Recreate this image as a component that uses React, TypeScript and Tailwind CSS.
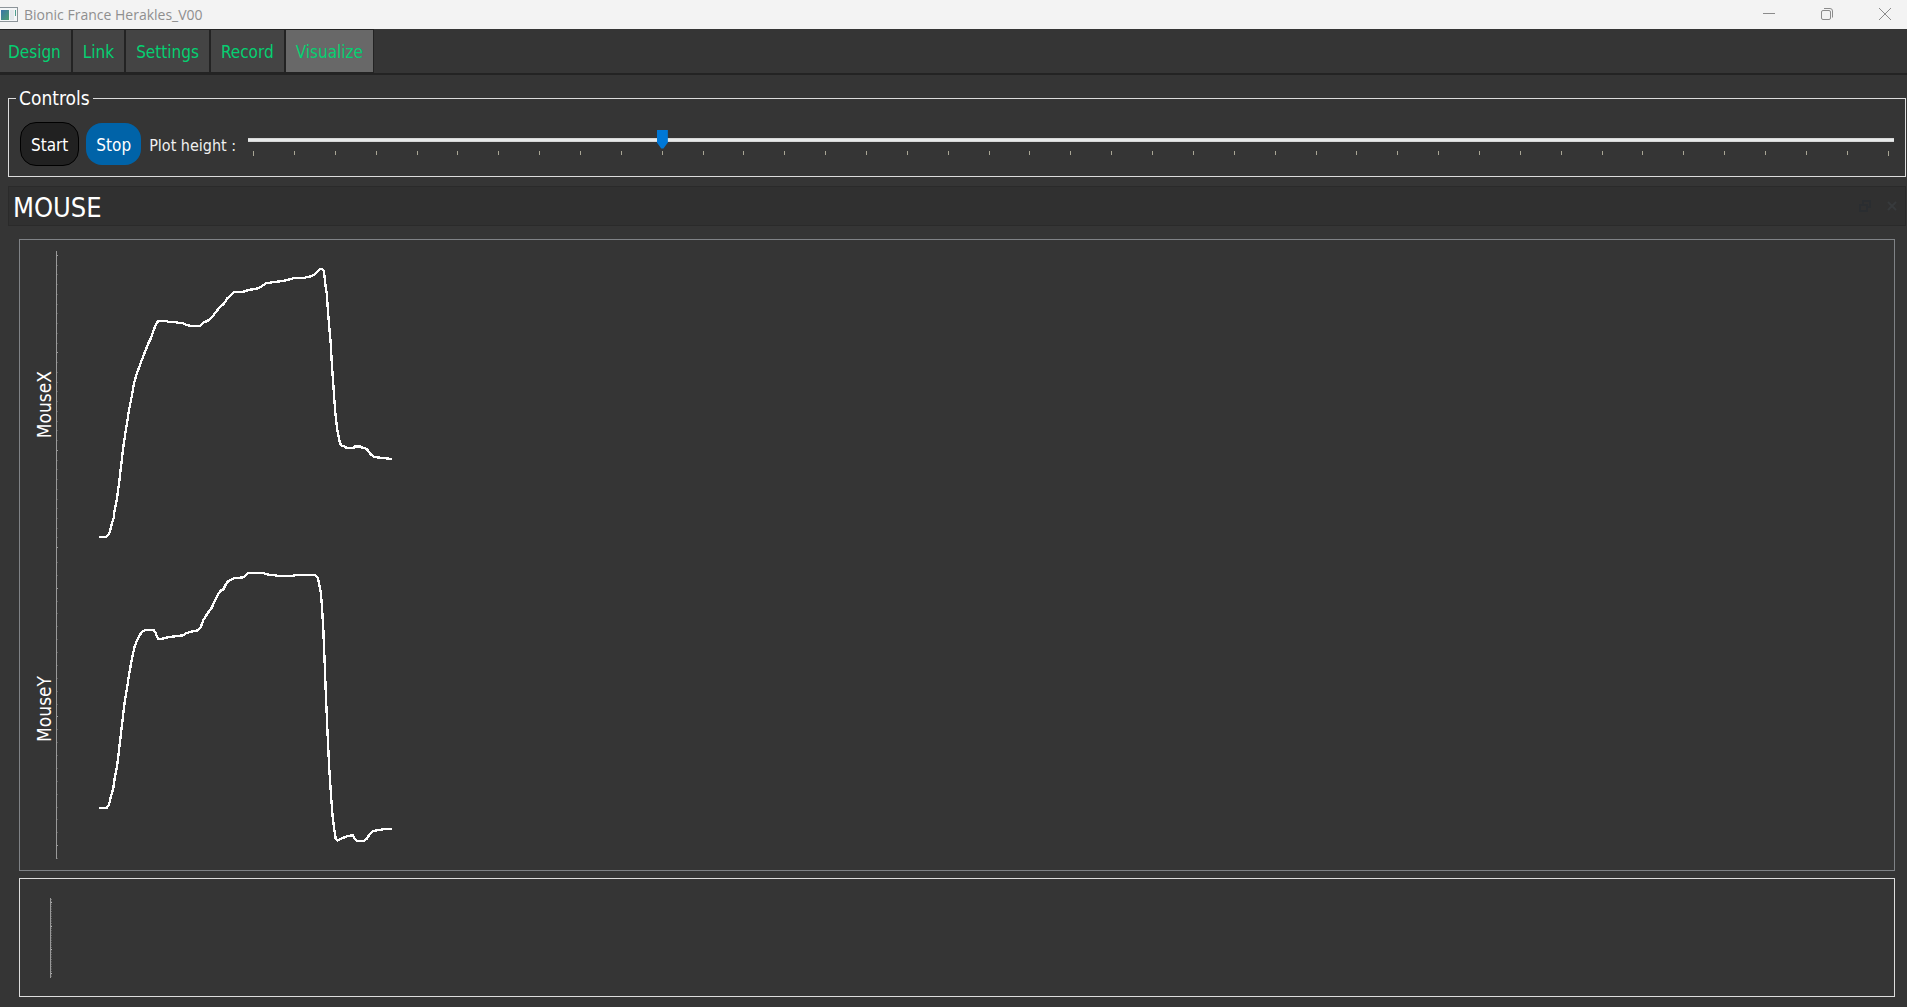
import { useState } from 'react';
import type { ReactNode } from 'react';

// ─── Data ─────────────────────────────────────────────────────────────────────

const TABS = ['Design', 'Link', 'Settings', 'Record', 'Visualize'];

interface Channel {
  name: string;
  viewBox: string;
  points: string;
  firstTick: number;
  tickStep: number;
  majorOffset: number;
}

const CHANNELS: Channel[] = [
  {
    name: 'MouseX',
    viewBox: '171 93 1005 912',
    points:
      '297,951 318,951 327,943 331,930 335,912 341,895 343,876 351,836 357,790 363,740 370,680 376,640 381,610 387,570 395,530 402,490 409,465 421,432 433,400 445,370 453,354 460,334 468,312 476,302 498,302 505,306 528,306 534,309 550,310 560,315 572,318 600,318 612,307 622,303 636,292 646,278 660,261 671,252 682,235 703,216 731,215 745,210 770,206 782,201 798,190 815,187 850,183 880,175 915,173 932,169 944,163 952,154 959,147 967,147 972,154 975,185 980,220 986,300 992,370 996,440 1001,510 1006,580 1012,630 1018,662 1023,676 1034,679 1040,684 1060,684 1066,679 1080,679 1084,682 1096,685 1104,691 1110,701 1122,711 1150,714 1176,717',
    firstTick: 4,
    tickStep: 9.74,
    majorOffset: 0,
  },
  {
    name: 'MouseY',
    viewBox: '171 45 1005 912',
    points:
      '297,804 320,804 327,794 332,772 340,744 344,715 351,680 357,630 364,570 370,520 375,480 381,445 387,405 395,360 403,323 411,301 420,284 428,274 437,269 460,269 466,277 474,296 488,296 508,291 550,286 558,280 572,275 594,271 602,262 610,240 620,224 636,202 643,185 654,163 662,152 670,148 676,136 684,124 701,115 730,112 744,99 790,99 800,103 832,107 880,107 890,105 945,104 953,112 957,130 962,155 966,200 970,270 974,370 977,450 980,520 984,610 988,690 992,750 997,820 1002,865 1007,895 1013,901 1026,895 1042,888 1058,886 1064,895 1072,903 1090,903 1100,897 1108,884 1118,873 1150,868 1176,866',
    firstTick: 7,
    tickStep: 12.87,
    majorOffset: 2,
  },
];

const SLIDER_TICKS = Array.from({ length: 41 }, (_, i) => i);

// ─── Title bar ────────────────────────────────────────────────────────────────

function AppIcon() {
  return (
    <svg className="h-4 w-[18px]" viewBox="0 0 18 16" aria-hidden="true">
      <defs>
        <linearGradient id="appicon" x1="0" y1="0" x2="1" y2="1">
          <stop offset="0" stopColor="#3a74a8" />
          <stop offset="1" stopColor="#4f9f70" />
        </linearGradient>
      </defs>
      <rect x="-0.5" y="0.5" width="18" height="14" fill="#f4f6f7" stroke="#8c9499" />
      <rect x="1" y="3" width="8" height="10" fill="url(#appicon)" />
      <rect x="10" y="3" width="4" height="10" fill="#e3e8ec" />
      <rect x="15" y="3" width="1" height="6" fill="#4f9f90" />
    </svg>
  );
}

function WindowButton({ label, children }: { label: string; children: ReactNode }) {
  return (
    <button aria-label={label} className="flex h-full w-[58px] items-center justify-center hover:bg-black/10">
      <svg className="h-3 w-3" viewBox="0 0 12 12" fill="none" stroke="#8b8b8b" aria-hidden="true">
        {children}
      </svg>
    </button>
  );
}

function TitleBar() {
  return (
    <header className="flex h-[29px] shrink-0 items-center bg-[#f3f3f3]">
      <AppIcon />
      <h1 className="ml-1.5 flex-1 font-['Open_Sans',sans-serif] text-sm text-[#8f8f8f]">
        Bionic France Herakles_V00
      </h1>
      <div className="-mr-[7px] flex h-full pb-px">
        <WindowButton label="Minimize">
          <path d="M0 5.5H12" />
        </WindowButton>
        <WindowButton label="Restore">
          <rect x="0.5" y="2.5" width="9" height="9" rx="1.5" />
          <path d="M3 .5H9a2.5 2.5 0 0 1 2.5 2.5V9.500" />
        </WindowButton>
        <WindowButton label="Close">
          <path d="M0 0L12 12M12 0L0 12" />
        </WindowButton>
      </div>
    </header>
  );
}

// ─── Tabs ─────────────────────────────────────────────────────────────────────

function TabBar() {
  const [active, setActive] = useState('Visualize');

  return (
    <nav className="flex h-[46px] shrink-0 border-b-2 border-[#232323]">
      {TABS.map((tab) => (
        <button
          key={tab}
          onClick={() => setActive(tab)}
          className={
            'border-y border-r-2 border-[#232323] px-2.5 pt-0.5 text-[17px] leading-6 text-[#05d072] first:pl-2 last:border-r ' +
            (tab === active ? 'bg-[#686868]' : 'bg-[#444444]')
          }
        >
          {tab}
        </button>
      ))}
    </nav>
  );
}

// ─── Controls ─────────────────────────────────────────────────────────────────

function HeightSlider() {
  const [height, setHeight] = useState(10);

  return (
    <div className="flex flex-1 flex-col pb-[3px]">
      <input
        id="plot-height"
        type="range"
        min={0}
        max={40}
        value={height}
        onChange={(e) => setHeight(Number(e.target.value))}
        className="h-5 w-full cursor-pointer appearance-none bg-transparent [&::-webkit-slider-runnable-track]:h-1 [&::-webkit-slider-runnable-track]:bg-[#e7eaea] [&::-webkit-slider-runnable-track]:border-y [&::-webkit-slider-runnable-track]:border-[#d6d6d6] [&::-webkit-slider-thumb]:-mt-[9px] [&::-webkit-slider-thumb]:h-[19px] [&::-webkit-slider-thumb]:w-[11px] [&::-webkit-slider-thumb]:appearance-none [&::-webkit-slider-thumb]:bg-[#0078d7] [&::-webkit-slider-thumb]:[clip-path:polygon(0_0,100%_0,100%_68%,60%_100%,40%_100%,0_68%)]"
      />
      <div className="mt-px flex h-[5px] justify-between px-[5px]" aria-hidden="true">
        {SLIDER_TICKS.map((i) => (
          <span key={i} className="h-1 w-px bg-[#a8a594] first:h-[5px] last:h-[5px]" />
        ))}
      </div>
    </div>
  );
}

function Controls() {
  return (
    <fieldset className="ml-2 mr-px mt-[11px] shrink-0 border border-[#dcdcdc] pb-[10px] pl-[11px] pr-[11px]">
      <legend className="-ml-1 px-[3px] text-[19px] leading-6 text-white">Controls</legend>
      <div className="flex items-center pt-3">
        <button className="h-11 rounded-2xl border border-black bg-[#212121] px-2.5 pt-[3px] text-[17px] text-white">
          Start
        </button>
        <button className="ml-[7px] h-[42px] rounded-2xl bg-[#0063a8] px-2.5 pt-[3px] text-[17px] text-white">
          Stop
        </button>
        <label htmlFor="plot-height" className="ml-2 mr-3 pt-[3px] text-base text-[#f0f0f0]">
          Plot height :
        </label>
        <HeightSlider />
      </div>
    </fieldset>
  );
}

// ─── Plots ────────────────────────────────────────────────────────────────────

function DockTitle() {
  return (
    <div className="ml-2 mr-px mt-[9px] flex h-10 shrink-0 items-center border border-[#2a2a2a] bg-[#303030] pl-1 pr-2">
      <h2 className="flex-1 pt-[3px] text-[27px] leading-8 text-white">MOUSE</h2>
      <button aria-label="Float panel" className="mr-4">
        <svg className="h-3 w-3" viewBox="0 0 12 12" fill="none" stroke="#2a2d30" strokeWidth="2" aria-hidden="true">
          <path d="M4 4V1H11V7H8M1 5H8V11H1Z" />
        </svg>
      </button>
      <button aria-label="Close panel">
        <svg className="h-[10px] w-[10px]" viewBox="0 0 10 10" stroke="#373a3c" strokeWidth="2" aria-hidden="true">
          <path d="M1 1L9 9M9 1L1 9" />
        </svg>
      </button>
    </div>
  );
}

function ChannelPlot({ channel }: { channel: Channel }) {
  const ticks: number[] = [];
  for (let y = channel.firstTick; y < 304; y += channel.tickStep) ticks.push(Math.round(y));

  return (
    <div className="flex min-h-0 flex-1">
      <div className="flex w-9 items-center justify-end pt-1">
        <span className="rotate-180 text-[19px] leading-6 text-white [writing-mode:vertical-rl]">{channel.name}</span>
      </div>
      <svg className="h-full w-0.5" viewBox="0 0 2 304" preserveAspectRatio="none" aria-hidden="true">
        <rect width="1" height="304" fill="#999999" />
        {ticks.map((y, i) => (
          <rect key={y} x="1" y={y} width="1" height="1" fill={i % 10 === channel.majorOffset ? '#999999' : '#5c5c5c'} />
        ))}
      </svg>
      <svg
        className="-ml-px h-full w-[335px]"
        viewBox={channel.viewBox}
        preserveAspectRatio="none"
        role="img"
        aria-label={channel.name}
      >
        <polyline points={channel.points} fill="none" stroke="#ffffff" strokeWidth="7" shapeRendering="crispEdges" />
      </svg>
    </div>
  );
}

function TimeAxis() {
  return (
    <section className="ml-[19px] mr-3 mt-[7px] h-[119px] shrink-0 border border-[#dddddd] py-[19px] pl-[30px]">
      <svg className="h-20 w-0.5" viewBox="0 0 2 80" aria-hidden="true">
        <rect width="1" height="80" fill="#999999" />
        <path d="M1.500 1V80" stroke="#6a6a6a" strokeDasharray="1 1.400" />
        <path d="M1.500 4v1M1.500 28v1M1.500 51v1M1.500 75v1" stroke="#b0b0b0" />
      </svg>
    </section>
  );
}

// ─── Main export ──────────────────────────────────────────────────────────────

export default function App() {
  return (
    <div className="flex h-screen min-h-[720px] flex-col bg-[#353535] pb-[10px] font-['DejaVu_Sans_Condensed','DejaVu_Sans',sans-serif]">
      <TitleBar />
      <TabBar />
      <Controls />
      <DockTitle />
      <main className="ml-[19px] mr-3 mt-[13px] flex min-h-0 flex-1 flex-col border border-[#7f8286] py-[11px]">
        {CHANNELS.map((channel) => (
          <ChannelPlot key={channel.name} channel={channel} />
        ))}
      </main>
      <TimeAxis />
    </div>
  );
}
